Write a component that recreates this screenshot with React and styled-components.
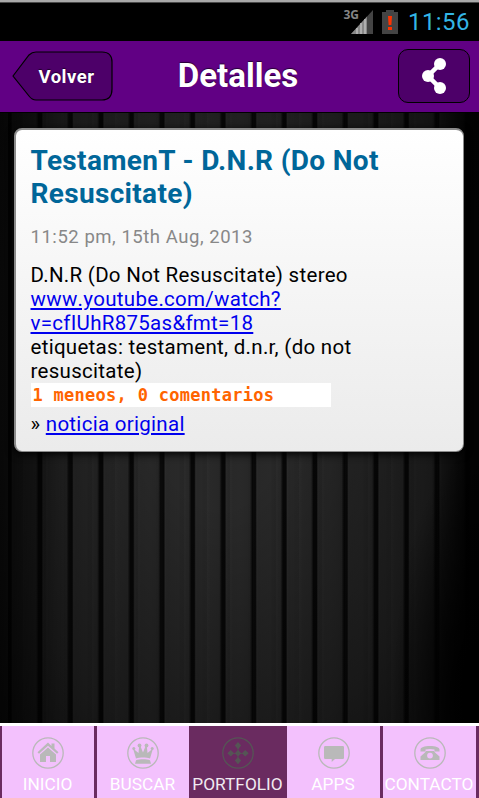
import React from 'react';
import styled, { createGlobalStyle } from 'styled-components';

const GlobalStyle = createGlobalStyle`
    * {
        box-sizing: border-box;
    }

    body {
        margin: 0;
        background: #000;
        font-family: Roboto, 'Liberation Sans', sans-serif;
    }
`;

const Screen = styled.div`
    display: flex;
    flex-direction: column;
    width: 479px;
    height: 798px;
    overflow: hidden;
`;

const StatusBar = styled.div`
    display: flex;
    align-items: center;
    justify-content: flex-end;
    height: 41px;
    padding: 3px 9px 0 0;
    background: linear-gradient(#a9a9a9 2px, #4a4a4a 2px, #4a4a4a 3px, #000 3px);
`;

const Clock = styled.span`
    width: 62px;
    margin-left: 10px;
    color: #33b5e5;
    font-size: 24px;
    line-height: 28px;
    letter-spacing: 0.4px;
    white-space: nowrap;
`;

const Header = styled.header`
    display: flex;
    align-items: center;
    justify-content: space-between;
    height: 72px;
    padding: 0 9px 1px 12px;
    border-bottom: 1px solid #000;
    background: #610084;
`;

const BackButton = styled.button`
    display: grid;
    width: 101px;
    height: 50px;
    padding: 0;
    border: 0;
    background: none;
    color: #fff;
    font: bold 18.5px/50px Roboto, sans-serif;
    text-shadow: 0 -1px 1px rgba(0, 0, 0, 0.6);

    & > * {
        grid-area: 1 / 1;
    }

    span {
        padding: 1px 0 0 8px;
        letter-spacing: 0.5px;
    }
`;

const HeaderTitle = styled.h1`
    margin: 0;
    padding-right: 35px;
    color: #fff;
    font-size: 33px;
    line-height: 40px;
    text-shadow: 0 -1px 1px rgba(0, 0, 0, 0.6);
`;

const ShareButton = styled.button`
    display: flex;
    align-items: center;
    justify-content: center;
    width: 72px;
    height: 54px;
    margin-top: -1px;
    padding: 0;
    border: 1.5px solid #000;
    border-radius: 10px;
    background: #4d0069;
`;

const Content = styled.main`
    flex: 1;
    padding: 15px 15px 0 14px;
    background:
        linear-gradient(90deg, rgba(0, 0, 0, 0.7), transparent 14%, transparent 90%, rgba(0, 0, 0, 0.85) 98%),
        radial-gradient(ellipse 18% 40% at 100% 95%, #000 20%, transparent 100%),
        radial-gradient(ellipse 62% 85% at 46% 43%, transparent 25%, rgba(0, 0, 0, 0.4) 75%, #000 130%),
        repeating-linear-gradient(90deg, rgba(255, 255, 255, 0.01) 0 1px, transparent 3px 17px, rgba(0, 0, 0, 0.04) 19px 23px),
        repeating-linear-gradient(90deg, #070707 0 3px, #2b2b2b 4.5px, #282828 6px, #292929 18px, #272727 28px, #070707 30.55px) 8px 0;
`;

const Card = styled.article`
    height: 324px;
    padding: 14px 15px 0 14.5px;
    border: 1px solid #8b8b8b;
    border-left-width: 2px;
    border-top-width: 2px;
    border-radius: 8px;
    background: linear-gradient(#fff, #ebebeb);
    box-shadow: 0 2px 8px #000;
    color: #000;
`;

const CardTitle = styled.h2`
    margin: 0;
    color: #069;
    font-size: 28px;
    line-height: 33px;
    letter-spacing: 0.33px;
`;

const PostDate = styled.div`
    margin-top: 16px;
    color: #888;
    font-size: 18.5px;
    line-height: 22px;
    letter-spacing: 0.54px;
`;

const Body = styled.div`
    margin-top: 15px;
    font-size: 20.5px;
    line-height: 24px;
    letter-spacing: 0.29px;
    white-space: nowrap;
`;

const Link = styled.a`
    color: #00e;
    text-decoration: underline;
`;

const VideoLink = styled(Link)`
    font-kerning: none;
`;

const VoteCount = styled.div`
    width: 300px;
    height: 24px;
    padding-left: 2px;
    background: #fff;
    color: #ff6400;
    font: bold 17px/24px 'DejaVu Sans Mono', monospace;
    letter-spacing: 0.28px;
    white-space: pre;
`;

const Source = styled.div`
    margin-top: 5px;
`;

const TabBar = styled.nav`
    display: flex;
    height: 75px;
    padding-left: 2px;
    border-top: 3px solid #fff;
    background: #6a2b60;
`;

const Tab = styled.div`
    display: flex;
    flex-direction: column;
    align-items: center;
    flex: none;
    width: ${(props) => props.$width}px;
    padding-top: 11px;
    border-right: ${(props) => (props.$divider ? '3px solid #6a2b60' : '0')};
    background: ${(props) => (props.$active ? '#6a2b60' : '#f3c1fd')};
    color: ${(props) => (props.$active ? '#555' : '#b9b9b9')};
`;

const TabLabel = styled.span`
    margin: 5px 1px 0 0;
    color: ${(props) => (props.$active ? '#f0eaf0' : '#fff')};
    font-size: 17.3px;
    line-height: 20px;
    white-space: nowrap;
`;

const glyphs = {
    home: (
        <g fill="currentColor">
            <path d="M16 5.5 5.5 15.3l1.5 1.5L16 8.7l9 8.1 1.5-1.5-4-3.8V6.5h-3V9z" />
            <path d="M16 10.5 8 17.4V25h6v-6h4v6h6v-7.6z" />
        </g>
    ),
    crown: (
        <g fill="currentColor">
            <path d="M9 21.5 6 11.5l5.5 4.5.7-7h1.2l2.6 6.5L18.6 9h1.2l.7 7 5.5-4.5-3 10c-4-1.2-10-1.2-14 0z" />
            <circle cx="6.8" cy="11.5" r="1.5" />
            <circle cx="12.5" cy="8.5" r="1.9" />
            <circle cx="19.5" cy="8.5" r="1.9" />
            <circle cx="25.2" cy="11.5" r="1.5" />
            <path d="M9 23.2c4-1.2 10-1.2 14 0l1 3.6H8z" />
        </g>
    ),
    move: (
        <g fill="currentColor">
            <path d="m16 5 3.2 3.6-3.2 3.6-3.2-3.6zM16 20l3.2 3.6-3.2 3.6-3.2-3.6zM8.8 13l3.2 3.3-3.2 3.3-3.5-3.3zM23.2 13l3.5 3.3-3.5 3.3-3.2-3.3zM16 13l3.2 3.3-3.2 3.3-3.2-3.3z" />
            <path d="M15.6 10h.8v12h-.8zM10 15.9h12v.8H10z" />
        </g>
    ),
    chat: <path fill="currentColor" d="M7.2 9h17.6q1.2 0 1.2 1.2v10.6q0 1.2-1.2 1.2H17l-3.3 3V22H7.2Q6 22 6 20.8V10.2Q6 9 7.2 9z" />,
    phone: (
        <g fill="currentColor">
            <path d="M6.5 14.5v-2c0-2 4-3.5 9.5-3.5s9.5 1.5 9.5 3.5v2h-5v-2c-2.7-.7-6.3-.7-9 0v2z" />
            <path
                fillRule="evenodd"
                d="M12 14h8l1 1.5 4.5 4V23h-19v-3.5l4.5-4zM16 15.7a2.9 2.9 0 1 0 0 5.8 2.9 2.9 0 0 0 0-5.8z"
            />
        </g>
    ),
};

const TabIcon = ({ name }) => (
    <svg width="32" height="32" viewBox="0 0 32 32">
        <circle cx="16" cy="16" r="15.2" fill="none" stroke="currentColor" strokeWidth="1.3" />
        {glyphs[name]}
    </svg>
);

const ShareIcon = () => (
    <svg width="26" height="38" viewBox="0 0 26 38">
        <path d="M19 7 7 19l12 12" fill="none" stroke="#fff" strokeWidth="4.5" />
        <circle cx="19" cy="7" r="6" fill="#fff" />
        <circle cx="7" cy="19" r="6" fill="#fff" />
        <circle cx="19" cy="31" r="6" fill="#fff" />
    </svg>
);

const NetworkLabel = styled.span`
    align-self: flex-start;
    margin: 5px -8px 0 0;
    color: #858585;
    font-family: 'Noto Sans', sans-serif;
    font-size: 12px;
    font-weight: bold;
    line-height: 14px;
`;

const SignalIcon = () => (
    <svg width="22" height="24" viewBox="0 0 22 24">
        <path d="M22 0v24H0z" fill="#444" />
        <path d="M16 6.5V24H0z" fill="#888" />
        <path d="M6 18v6M10 13v11M14 9v15" stroke="#bbb" strokeWidth="1.5" />
    </svg>
);

const BatteryIcon = styled(({ className }) => (
    <svg className={className} width="16" height="24" viewBox="0 0 16 24">
        <path d="M4 0h8v2h4v22H0V2h4z" fill="#444" />
        <path d="M6 6h4l-.6 9H6.6zM6 17h4v3H6z" fill="#ff3300" />
    </svg>
))`
    margin-left: 9px;
`;

const tabs = [
    { label: 'INICIO', icon: 'home', width: 95, divider: true },
    { label: 'BUSCAR', icon: 'crown', width: 92 },
    { label: 'PORTFOLIO', icon: 'move', width: 98, active: true },
    { label: 'APPS', icon: 'chat', width: 96, divider: true },
    { label: 'CONTACTO', icon: 'phone', width: 96, divider: true },
];

const App = () => {
    return (
        <>
            <GlobalStyle />
            <Screen>
                <StatusBar>
                    <NetworkLabel>3G</NetworkLabel>
                    <SignalIcon />
                    <BatteryIcon />
                    <Clock>11:56</Clock>
                </StatusBar>
                <Header>
                    <BackButton>
                        <svg width="101" height="50" viewBox="0 0 101 50">
                            <path
                                d="M1 25 17 4Q20 1 24 1H90Q100 1 100 11V38Q100 49 90 49H24Q20 49 17 45Z"
                                fill="#4d0069"
                                stroke="#000"
                                strokeWidth="1.2"
                            />
                        </svg>
                        <span>Volver</span>
                    </BackButton>
                    <HeaderTitle>Detalles</HeaderTitle>
                    <ShareButton aria-label="Compartir">
                        <ShareIcon />
                    </ShareButton>
                </Header>
                <Content>
                    <Card>
                        <CardTitle>TestamenT - D.N.R (Do Not Resuscitate)</CardTitle>
                        <PostDate>11:52 pm, 15th Aug, 2013</PostDate>
                        <Body>
                            D.N.R (Do Not Resuscitate) stereo
                            <br />
                            <VideoLink>
                                www.youtube.com/watch?
                                <br />
                                v=cfIUhR875as&amp;fmt=18
                            </VideoLink>
                            <br />
                            etiquetas: testament, d.n.r, (do not
                            <br />
                            resuscitate)
                            <VoteCount>1 meneos, 0 comentarios</VoteCount>
                            <Source>
                                » <Link>noticia original</Link>
                            </Source>
                        </Body>
                    </Card>
                </Content>
                <TabBar>
                    {tabs.map((tab) => (
                        <Tab key={tab.label} $width={tab.width} $divider={tab.divider} $active={tab.active}>
                            <TabIcon name={tab.icon} />
                            <TabLabel $active={tab.active}>{tab.label}</TabLabel>
                        </Tab>
                    ))}
                </TabBar>
            </Screen>
        </>
    );
};

export default App;
